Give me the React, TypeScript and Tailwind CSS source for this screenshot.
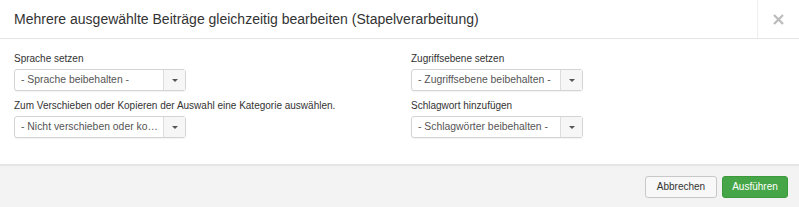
import React from 'react';

const font = { fontFamily: '"Liberation Sans", Arial, sans-serif' };

const Select: React.FC<{ value: string }> = ({ value }) => (
  <div className="flex h-[22px] w-[172px] rounded-[3px] border border-[#d4d4d4] bg-white shadow-[0_1px_1px_rgba(0,0,0,0.05)]">
    <div className="min-w-0 flex-1 truncate pl-[6px] pr-[3px] text-[10.4px] leading-[20px] text-[#555]">{value}</div>
    <div className="flex w-[22px] items-center justify-center border-l border-[#ddd] bg-[#f6f6f6]">
      <svg width="6" height="3" viewBox="0 0 6 3">
        <path d="M0 0h6L3 3z" fill="#555" />
      </svg>
    </div>
  </div>
);

const Field: React.FC<{ label: string; value: string }> = ({ label, value }) => (
  <div className="flex flex-col">
    <label className="mb-[3px] text-[10px] leading-[14px] text-[#333]">{label}</label>
    <Select value={value} />
  </div>
);

export default function App() {
  return (
    <div className="h-[207px] w-[799px] overflow-hidden bg-white" style={font}>
      <div className="flex h-[39px] border-b border-[#e5e5e5]">
        <h3 className="flex-1 pl-[14px] text-[14px] leading-[38px] text-[#333]">
          Mehrere ausgewählte Beiträge gleichzeitig bearbeiten (Stapelverarbeitung)
        </h3>
        <button className="flex w-[42px] items-center justify-center border-l border-[#eee]">
          <svg width="11" height="11" viewBox="0 0 11 11">
            <path d="M1 1l9 9M10 1l-9 9" stroke="#bbb" strokeWidth="2.2" />
          </svg>
        </button>
      </div>
      <div className="grid h-[125px] grid-cols-2 content-start gap-x-[23px] gap-y-[8px] px-[14px] pt-[13px]">
        <Field label="Sprache setzen" value="- Sprache beibehalten -" />
        <Field label="Zugriffsebene setzen" value="- Zugriffsebene beibehalten -" />
        <Field label="Zum Verschieben oder Kopieren der Auswahl eine Kategorie auswählen." value="- Nicht verschieben oder kopieren -" />
        <Field label="Schlagwort hinzufügen" value="- Schlagwörter beibehalten -" />
      </div>
      <div className="flex h-[43px] items-center justify-end gap-[5px] border-t-2 border-[#e5e5e5] bg-[#f3f3f3] pr-[11px]">
        <button className="h-[22px] w-[72px] rounded-[3px] border border-[#c8c8c8] bg-[#f8f8f8] text-[10px] text-[#333]">
          Abbrechen
        </button>
        <button className="h-[22px] w-[66px] rounded-[3px] border border-[#3c9a3c] bg-[#46a546] text-[10px] text-white">
          Ausführen
        </button>
      </div>
    </div>
  );
}
